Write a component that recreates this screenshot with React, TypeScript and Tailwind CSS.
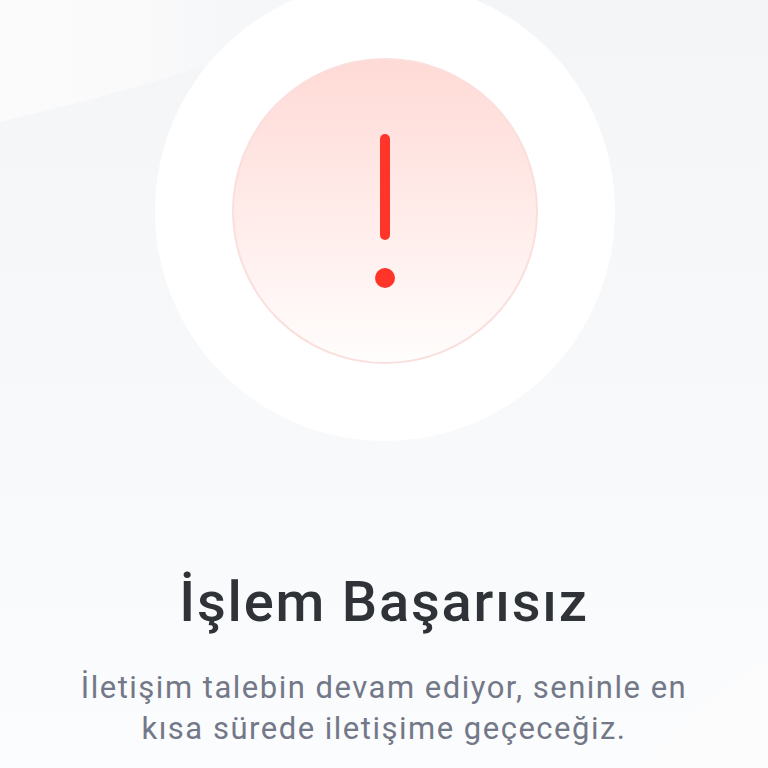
export default function App() {
  return (
    <div className="relative h-[768px] w-[768px] overflow-hidden bg-gradient-to-b from-[#f4f5f7] to-[#fbfcfd] font-['Roboto',sans-serif]">
      {/* Background waves */}
      <svg className="absolute inset-0" width="768" height="768" viewBox="0 0 768 768" fill="none">
        <defs>
          <linearGradient id="topWave" x1="0" y1="60" x2="230" y2="60" gradientUnits="userSpaceOnUse">
            <stop offset="0" stopColor="#fbfbfc" />
            <stop offset="0.6" stopColor="#fafafb" />
            <stop offset="1" stopColor="#f6f7f8" />
          </linearGradient>
        </defs>
        <path d="M0 0H300V30C210 70 90 100 0 122V0Z" fill="url(#topWave)" />
        <path d="M640 768C680 725 725 685 768 660V768H640Z" fill="#fcfcfd" />
      </svg>

      <div className="relative flex flex-col items-center">
        {/* Status icon */}
        <div className="mt-[-19px] ml-px flex h-[460px] w-[460px] items-center justify-center rounded-full bg-white">
          <div className="flex h-[306px] w-[306px] flex-col items-center rounded-full border-2 border-[#fadfdc] bg-gradient-to-b from-[#ffdad6] to-[#fffdfd] pt-[74px]">
            <div className="h-[106px] w-[10px] rounded-full bg-[#ff3529]" />
            <div className="mt-[28px] h-[20px] w-[20px] rounded-full bg-[#ff3529]" />
          </div>
        </div>

        {/* Message */}
        <h1 className="mt-[124px] text-[56px] leading-[74px] font-medium tracking-[1.82px] whitespace-nowrap text-[#2f3337]">
          İşlem Başarısız
        </h1>
        <p className="mt-[28px] text-center text-[31px] leading-[41px] tracking-[1.5px] whitespace-nowrap text-[#737888]">
          İletişim talebin devam ediyor, seninle en
          <br />
          kısa sürede iletişime geçeceğiz.
        </p>
      </div>
    </div>
  );
}
